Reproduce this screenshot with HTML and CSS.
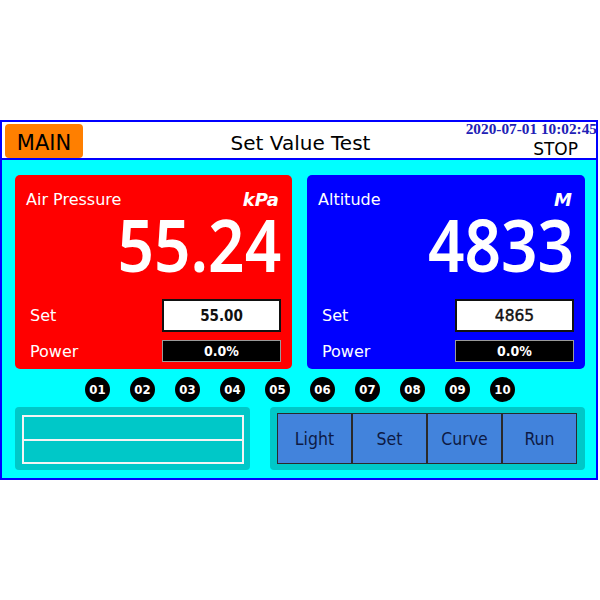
FILE: index.html
```html
<!DOCTYPE html>
<html>
<head>
<meta charset="utf-8">
<link rel="stylesheet" href="styles.css">
</head>
<body>
<div class="frame">
  <div class="header">
    <div class="main-btn">MAIN</div>
    <div class="title">Set Value Test</div>
    <div class="status">
      <div class="date">2020-07-01 10:02:45</div>
      <div class="state">STOP</div>
    </div>
  </div>
  <div class="content">
    <div class="cards">
      <div class="card card-red">
        <div class="card-top"><span class="card-title">Air Pressure</span><span class="unit">kPa</span></div>
        <div class="big"><span class="big-num">55.24</span></div>
        <div class="row row-set"><span class="label">Set</span><div class="set-box bold">55.00</div></div>
        <div class="row row-power"><span class="label">Power</span><div class="power-bar">0.0%</div></div>
      </div>
      <div class="card card-blue">
        <div class="card-top"><span class="card-title">Altitude</span><span class="unit">M</span></div>
        <div class="big"><span class="big-num">4833</span></div>
        <div class="row row-set"><span class="label">Set</span><div class="set-box medium">4865</div></div>
        <div class="row row-power"><span class="label">Power</span><div class="power-bar">0.0%</div></div>
      </div>
    </div>
    <div class="dots">
      <span class="dot">01</span><span class="dot">02</span><span class="dot">03</span><span class="dot">04</span><span class="dot">05</span>
      <span class="dot">06</span><span class="dot">07</span><span class="dot">08</span><span class="dot">09</span><span class="dot">10</span>
    </div>
    <div class="bottom">
      <div class="panel panel-left">
        <div class="table">
          <div class="table-row"></div>
          <div class="table-row"></div>
        </div>
      </div>
      <div class="panel panel-right">
        <div class="btn">Light</div>
        <div class="btn">Set</div>
        <div class="btn">Curve</div>
        <div class="btn">Run</div>
      </div>
    </div>
  </div>
</div>
</body>
</html>
```

FILE: styles.css
```css
html, body {
  margin: 0;
  padding: 0;
  background: #ffffff;
}
body {
  font-family: "DejaVu Sans", sans-serif;
  color: #000;
}
.frame {
  margin-top: 120px;
  width: 598px;
  height: 360px;
  box-sizing: border-box;
  border: 2px solid #0000ff;
  display: flex;
  flex-direction: column;
}
.header {
  height: 36px;
  flex: none;
  border-bottom: 2px solid #0000ff;
  background: #fff;
  display: grid;
  grid-template-columns: 1fr auto 1fr;
  align-items: center;
}
.main-btn {
  margin-left: 3px;
  width: 78px;
  height: 34px;
  box-sizing: border-box;
  padding-top: 4px;
  background: #ff7f00;
  border-radius: 4px;
  font-size: 21px;
  display: flex;
  align-items: center;
  justify-content: center;
}
.title {
  font-size: 20px;
  padding-top: 5px;
  padding-left: 3px;
}
.status {
  align-self: stretch;
  display: flex;
  flex-direction: column;
  align-items: flex-end;
}
.date {
  font-family: "Liberation Serif", serif;
  font-weight: bold;
  font-size: 15.3px;
  line-height: 14px;
  color: #2121b5;
  margin-right: -1px;
}
.state {
  font-size: 17px;
  line-height: 20px;
  margin-top: 3px;
  margin-right: 18px;
}
.content {
  flex: 1;
  background: #00ffff;
  padding: 15px 11px 0 13px;
}
.cards {
  display: flex;
  gap: 15px;
}
.card {
  height: 194px;
  box-sizing: border-box;
  padding: 12px 11px 7px 11px;
  border-radius: 5px;
  display: flex;
  flex-direction: column;
  color: #fff;
}
.card-red {
  width: 277px;
  background: #ff0000;
}
.card-blue {
  width: 278px;
  background: #0000ff;
}
.card-top {
  height: 24px;
  display: flex;
  justify-content: space-between;
  align-items: center;
}
.card-title {
  font-size: 16px;
}
.unit {
  font-size: 18px;
  font-weight: bold;
  font-style: italic;
  margin-right: 2px;
}
.big {
  height: 73px;
  font-size: 73px;
  line-height: 65px;
  text-align: right;
  margin-bottom: 15px;
}
.big-num {
  display: inline-block;
  font-family: "Noto Sans", "DejaVu Sans", sans-serif;
  font-weight: 600;
  transform: scaleX(0.875);
  transform-origin: right center;
}
.row {
  display: flex;
  justify-content: space-between;
  align-items: center;
}
.label {
  font-size: 16px;
  padding-left: 4px;
}
.row-set {
  height: 33px;
  margin-bottom: 8px;
}
.row-power {
  height: 22px;
}
.set-box {
  width: 119px;
  height: 33px;
  box-sizing: border-box;
  border: 2px solid #111;
  background: #fff;
  color: #111;
  display: flex;
  align-items: center;
  justify-content: center;
  font-size: 15px;
}
.set-box.bold {
  font-family: "DejaVu Sans Condensed", "DejaVu Sans", sans-serif;
  font-weight: bold;
}
.set-box.medium {
  font-size: 15.5px;
  -webkit-text-stroke: 0.4px #111;
}
.power-bar {
  width: 119px;
  height: 22px;
  box-sizing: border-box;
  border: 1px solid #9a9a9a;
  background: #000;
  color: #fff;
  display: flex;
  align-items: center;
  justify-content: center;
  font-family: "DejaVu Sans Condensed", "DejaVu Sans", sans-serif;
  font-weight: bold;
  font-size: 14px;
}
.dots {
  display: flex;
  gap: 20px;
  padding-left: 70px;
  margin-top: 8px;
}
.dot {
  width: 25px;
  height: 25px;
  border-radius: 50%;
  background: #000;
  color: #fff;
  font-family: "DejaVu Sans Condensed", "DejaVu Sans", sans-serif;
  font-weight: bold;
  font-size: 13px;
  display: flex;
  align-items: center;
  justify-content: center;
}
.bottom {
  display: flex;
  gap: 20px;
  margin-top: 5px;
}
.panel {
  height: 63px;
  box-sizing: border-box;
  background: #00c8c8;
  border-radius: 4px;
}
.panel-left {
  width: 235px;
  padding: 8px 6px 6px 7px;
}
.table {
  height: 49px;
  box-sizing: border-box;
  border: 2px solid #f4f4f4;
  display: flex;
  flex-direction: column;
}
.table-row {
  flex: 1;
}
.table-row + .table-row {
  border-top: 2px solid #f4f4f4;
}
.panel-right {
  width: 315px;
  padding: 6px 8px 6px 7px;
  display: flex;
}
.btn {
  width: 75px;
  height: 51px;
  box-sizing: border-box;
  border: 1px solid #2a2a2a;
  background: #4283dc;
  color: #0d1a45;
  font-family: "DejaVu Sans Condensed", "DejaVu Sans", sans-serif;
  font-size: 17.5px;
  display: flex;
  align-items: center;
  justify-content: center;
}
```
